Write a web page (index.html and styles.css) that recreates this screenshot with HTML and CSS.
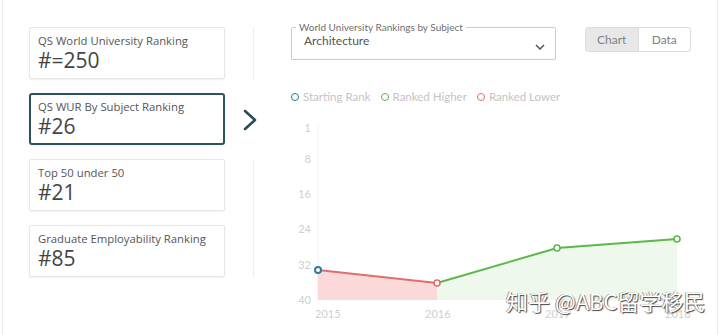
FILE: index.html
```html
<!DOCTYPE html>
<html lang="en">
  <head>
    <meta charset="UTF-8" />
    <meta name="viewport" content="width=device-width, initial-scale=1.0" />
    <title>Rankings</title>
    <link rel="stylesheet" href="styles.css">
  </head>
  <body>
    <div class="panel">
      <div class="cards">
        <div class="card">
          <div class="card-label">QS World University Ranking</div>
          <div class="card-rank">#=250</div>
        </div>
        <div class="card active">
          <div class="card-label">QS WUR By Subject Ranking</div>
          <div class="card-rank">#26</div>
        </div>
        <div class="card">
          <div class="card-label">Top 50 under 50</div>
          <div class="card-rank">#21</div>
        </div>
        <div class="card">
          <div class="card-label">Graduate Employability Ranking</div>
          <div class="card-rank">#85</div>
        </div>
      </div>

      <div class="divider">
        <div class="line line-top"></div>
        <div class="arrow">
          <svg width="16" height="24" viewBox="0 0 16 24">
            <polyline points="3,3 13,12 3,21" fill="none" stroke="#2c4b56" stroke-width="2.6" stroke-linecap="round" stroke-linejoin="round" />
          </svg>
        </div>
        <div class="line line-bottom"></div>
      </div>

      <div class="main">
        <div class="top-row">
          <fieldset class="select">
            <legend>World University Rankings by Subject</legend>
            <span class="select-value">Architecture</span>
            <svg class="chevron" width="10" height="6" viewBox="0 0 10 6">
              <polyline points="1,1 5,5 9,1" fill="none" stroke="#555" stroke-width="1.5" />
            </svg>
          </fieldset>
          <div class="toggle">
            <span class="toggle-btn on">Chart</span>
            <span class="toggle-btn">Data</span>
          </div>
        </div>

        <div class="legend">
          <span class="key"><i class="dot blue"></i>Starting Rank</span>
          <span class="key"><i class="dot green"></i>Ranked Higher</span>
          <span class="key"><i class="dot red"></i>Ranked Lower</span>
        </div>

        <svg class="chart" width="420" height="215" viewBox="0 0 420 215">
          <line x1="27" y1="10" x2="27" y2="185" stroke="#eeeeee" />
          <polygon points="27,155 146,168 146,185 27,185" fill="#fcd9d9" />
          <polygon points="146,168 266,133 386,124 386,185 146,185" fill="#eff8ec" />
          <g class="ylab" text-anchor="end">
            <text x="20" y="17">1</text>
            <text x="20" y="48">8</text>
            <text x="20" y="83">16</text>
            <text x="20" y="118">24</text>
            <text x="20" y="154">32</text>
            <text x="20" y="189">40</text>
          </g>
          <g class="xlab">
            <text x="24" y="203">2015</text>
            <text x="134" y="203">2016</text>
            <text x="254" y="203">2017</text>
            <text x="374" y="203">2018</text>
          </g>
          <line x1="27" y1="155" x2="146" y2="168" stroke="#e06e6e" stroke-width="2" />
          <polyline points="146,168 266,133 386,124" fill="none" stroke="#5cb84a" stroke-width="2" />
          <circle cx="27" cy="155" r="3" fill="#fff" stroke="#2f7aa0" stroke-width="2" />
          <circle cx="146" cy="168" r="3" fill="#fff" stroke="#e06e6e" stroke-width="1.6" />
          <circle cx="266" cy="133" r="3" fill="#fff" stroke="#5cb84a" stroke-width="1.6" />
          <circle cx="386" cy="124" r="3" fill="#fff" stroke="#5cb84a" stroke-width="1.6" />
        </svg>
      </div>

      <div class="watermark">知乎 @ABC留学移民</div>
    </div>
  </body>
</html>
```

FILE: styles.css
```css
body {
  margin: 0;
  background: #fff;
  font-family: "Open Sans", Arial, sans-serif;
}

.panel {
  position: relative;
  display: flex;
  margin: 0 2px;
  width: 716px;
  height: 335px;
  box-sizing: border-box;
  padding: 27px 0 0 26px;
  border-left: 1px solid #ededed;
  border-right: 1px solid #ededed;
}

.cards {
  display: flex;
  flex-direction: column;
  gap: 14px;
  width: 196px;
}

.card {
  height: 52px;
  box-sizing: border-box;
  padding: 5px 8px 0;
  border: 1px solid #e6e6e6;
  border-radius: 2px;
  box-shadow: 0 1px 2px rgba(0, 0, 0, 0.06);
}

.card.active {
  border: 2px solid #2d5360;
  border-radius: 3px;
  padding: 4px 7px 0;
}

.card-label {
  font-size: 11.3px;
  line-height: 15px;
  color: #555;
}

.card-rank {
  font-size: 21px;
  line-height: 24px;
  color: #454545;
}

.divider {
  display: flex;
  flex-direction: column;
  width: 66px;
}

.line {
  width: 1px;
  margin-left: 28px;
  background: #eeeeee;
}

.line-top {
  height: 53px;
}

.arrow {
  height: 80px;
  box-sizing: border-box;
  padding: 28px 0 0 17px;
}

.arrow svg {
  display: block;
}

.line-bottom {
  height: 118px;
}

.main {
  display: flex;
  flex-direction: column;
  width: 420px;
}

.top-row {
  display: flex;
  align-items: flex-start;
  gap: 29px;
  margin-top: -7px;
}

.select {
  position: relative;
  width: 265px;
  height: 40px;
  box-sizing: border-box;
  margin: 0;
  padding: 0 12px;
  border: 1px solid #acd8d8;
  border-radius: 2px;
  font-family: Lato, "Open Sans", sans-serif;
}

.select legend {
  font-size: 10px;
  line-height: 14px;
  color: #707070;
  padding: 0 3px;
  margin-left: -8px;
}

.select-value {
  display: block;
  font-size: 12px;
  line-height: 16px;
  color: #555;
  margin-top: -1px;
}

.chevron {
  position: absolute;
  right: 10px;
  top: 10px;
}

.toggle {
  display: flex;
  margin-top: 7px;
  width: 106px;
  height: 25px;
  box-sizing: border-box;
  border: 1px solid #dcdcdc;
  border-radius: 3px;
  overflow: hidden;
  font-family: Lato, "Open Sans", sans-serif;
  font-size: 12px;
  color: #808080;
}

.toggle-btn {
  flex: 1;
  display: flex;
  align-items: center;
  justify-content: center;
}

.toggle-btn.on {
  background: #e8e8e8;
  border-right: 1px solid #dcdcdc;
}

.legend {
  display: flex;
  gap: 10px;
  margin-top: 30px;
  font-family: Lato, "Open Sans", sans-serif;
  font-size: 11.5px;
  line-height: 14px;
  color: #c4c4c4;
}

.key {
  display: flex;
  align-items: center;
}

.dot {
  width: 6px;
  height: 6px;
  border-radius: 50%;
  border: 1.5px solid;
  margin-right: 4px;
}

.dot.blue {
  border-color: #2f7aa0;
}

.dot.green {
  border-color: #5cb84a;
}

.dot.red {
  border-color: #e07070;
}

.chart {
  display: block;
  margin-top: 11px;
}

.chart text {
  font-family: Lato, "Open Sans", sans-serif;
  font-size: 11px;
  fill: #cfcfcf;
}

.watermark {
  position: absolute;
  left: 503px;
  top: 285px;
  font-family: "Noto Sans CJK SC", sans-serif;
  font-size: 22px;
  line-height: 30px;
  color: #fff;
  text-shadow: 1px 1px 1px #444, -1px 0 0 #999;
}
```
